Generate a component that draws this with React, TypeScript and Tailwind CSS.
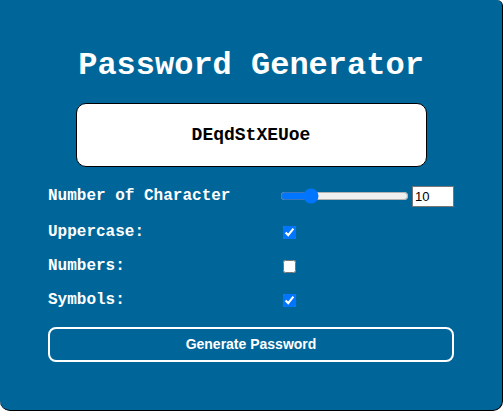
import React, { useState } from 'react'

const mono = { fontFamily: '"Courier New", "Liberation Mono", monospace' }

export default function App() {
    const [length, setLength] = useState(10)
    const [upper, setUpper] = useState(true)
    const [numbers, setNumbers] = useState(false)
    const [symbols, setSymbols] = useState(true)

    return (
        <div className="w-[503px] h-[411px] bg-white overflow-hidden">
            <div className="w-full h-full bg-[#006699] border-r border-b border-black rounded-br-[10px] rounded-bl-[10px] rounded-tr-[6px] flex flex-col">

                {/* Title */}
                <h1 className="mt-[48px] text-center text-white text-[32px] leading-[36px] font-bold" style={mono}>
                    Password Generator
                </h1>

                {/* Output box */}
                <div className="mx-auto mt-[19px] w-[351px] h-[64px] bg-white border border-black rounded-[10px] flex items-center justify-center">
                    <span className="text-black text-[18px] font-bold" style={mono}>DEqdStXEUoe</span>
                </div>

                {/* Options */}
                <div className="px-[48px] mt-[18px] flex flex-col text-white text-[16px] font-bold" style={mono}>
                    <div className="h-[22px] flex items-center">
                        <label className="w-[232px]">Number of Character</label>
                        <input
                            type="range"
                            min={5}
                            max={30}
                            value={length}
                            onChange={(e) => setLength(Number(e.target.value))}
                            className="w-[129px] m-[2px]"
                        />
                        <input
                            type="number"
                            value={length}
                            onChange={(e) => setLength(Number(e.target.value))}
                            className="ml-[1px] w-[42px] h-[21px] bg-white text-black border border-[#767676] px-[2px] text-[13px] font-normal"
                            style={{ fontFamily: '"Liberation Sans", Arial, sans-serif' }}
                        />
                    </div>
                    <div className="h-[22px] mt-[14px] flex items-center">
                        <label className="w-[232px]">Uppercase:</label>
                        <input type="checkbox" checked={upper} onChange={() => setUpper(!upper)} className="ml-[3px] w-[13px] h-[13px]" />
                    </div>
                    <div className="h-[22px] mt-[12px] flex items-center">
                        <label className="w-[232px]">Numbers:</label>
                        <input type="checkbox" checked={numbers} onChange={() => setNumbers(!numbers)} className="ml-[3px] w-[13px] h-[13px]" />
                    </div>
                    <div className="h-[22px] mt-[12px] flex items-center">
                        <label className="w-[232px]">Symbols:</label>
                        <input type="checkbox" checked={symbols} onChange={() => setSymbols(!symbols)} className="ml-[3px] w-[13px] h-[13px]" />
                    </div>
                </div>

                {/* Action */}
                <div className="px-[48px] mt-[16px]">
                    <button
                        className="w-[406px] h-[35px] border-2 border-white rounded-[8px] text-white text-[14px] font-bold"
                        style={{ fontFamily: '"Liberation Sans", Arial, sans-serif' }}
                    >
                        Generate Password
                    </button>
                </div>
            </div>
        </div>
    )
}
